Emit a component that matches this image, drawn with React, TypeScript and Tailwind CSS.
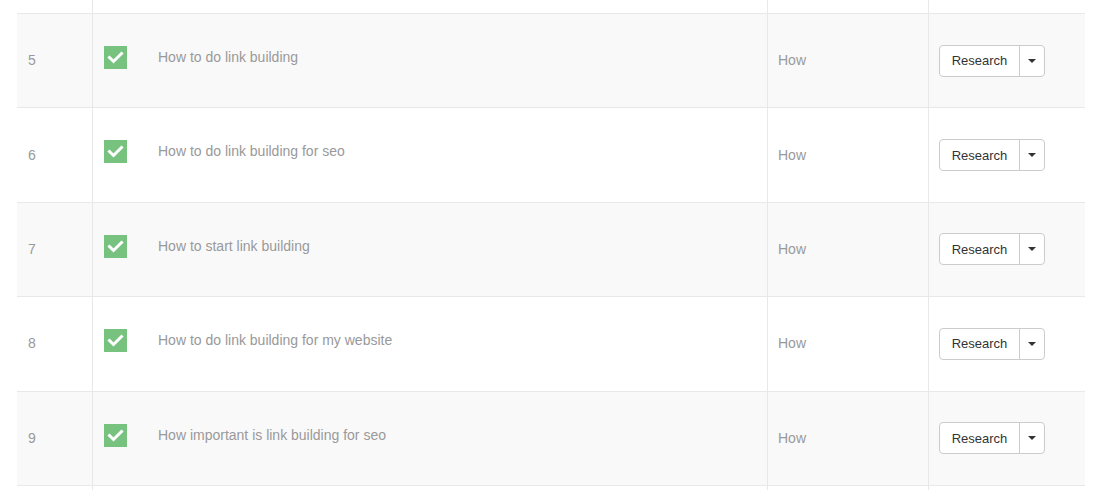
const rows = [
  { n: 5, kw: 'How to do link building', type: 'How' },
  { n: 6, kw: 'How to do link building for seo', type: 'How' },
  { n: 7, kw: 'How to start link building', type: 'How' },
  { n: 8, kw: 'How to do link building for my website', type: 'How' },
  { n: 9, kw: 'How important is link building for seo', type: 'How' },
];

function Check() {
  return (
    <div className="w-[23px] h-[23px] bg-[#77c27f] flex items-center justify-center shrink-0">
      <svg width="23" height="23" viewBox="0 0 23 23" fill="none">
        <path d="M5.5 11.5l4 4 8-8" stroke="#fff" strokeWidth={3} strokeLinecap="square" />
      </svg>
    </div>
  );
}

function ResearchButton() {
  return (
    <div className="flex h-[32px] border border-[#cccccc] rounded-[4px] bg-white">
      <button className="w-[79px] text-[13px] text-[#333] leading-none">Research</button>
      <button className="w-[25px] border-l border-[#cccccc] flex items-center justify-center">
        <span className="w-0 h-0 border-t-4 border-x-4 border-x-transparent border-t-[#333]" />
      </button>
    </div>
  );
}

export default function App() {
  return (
    <div className="w-[1101px] h-[490px] bg-white overflow-hidden pl-[17px] font-['Liberation_Sans',Arial,sans-serif]">
      <div className="w-[1068px]">
        <div className="grid grid-cols-[75px_675px_161px_157px] h-[13px]">
          <div />
          <div className="border-l border-[#e8e8e8]" />
          <div className="border-l border-[#e8e8e8]" />
          <div className="border-l border-[#e8e8e8]" />
        </div>
        {rows.map((r, i) => (
          <div
            key={r.n}
            className={`grid grid-cols-[75px_675px_161px_157px] h-[94.4px] border-t border-[#e8e8e8] ${
              i % 2 === 0 ? 'bg-[#f9f9f9]' : 'bg-white'
            }`}
          >
            <div className="flex items-center pl-[11px] text-[14px] text-[#999]">{r.n}</div>
            <div className="border-l border-[#e8e8e8] pl-[11px] pt-[32px] flex items-start gap-[31px]">
              <Check />
              <span className="pt-[1px] text-[14px] leading-[21px] text-[#999]">{r.kw}</span>
            </div>
            <div className="border-l border-[#e8e8e8] pl-[10px] flex items-center text-[14px] text-[#999]">
              {r.type}
            </div>
            <div className="border-l border-[#e8e8e8] pl-[10px] flex items-center">
              <ResearchButton />
            </div>
          </div>
        ))}
        <div className="grid grid-cols-[75px_675px_161px_157px] h-[20px] border-t border-[#e8e8e8]">
          <div />
          <div className="border-l border-[#e8e8e8]" />
          <div className="border-l border-[#e8e8e8]" />
          <div className="border-l border-[#e8e8e8]" />
        </div>
      </div>
    </div>
  );
}
